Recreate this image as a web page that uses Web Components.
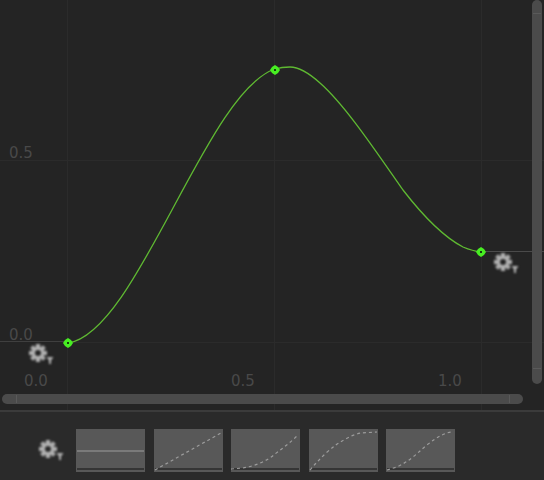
<!DOCTYPE html>
<html>
<head>
<meta charset="utf-8">
<title>Curve editor</title>
<style>
  html, body { margin: 0; background: #2a2a2a; }
</style>
</head>
<body>
<curve-editor>
  <curve-plot slot="plot"></curve-plot>
  <preset-bar slot="presets">
    <curve-thumb d="M1 22 L68 22"></curve-thumb>
    <curve-thumb d="M1 41 L67 4" dashed></curve-thumb>
    <curve-thumb d="M0 40 L12 39 C 24 37 36 32 44 25 C 52 19 60 13 67 6" dashed></curve-thumb>
    <curve-thumb d="M1 41 C 6 35 11 30 17 24 C 24 18 29 14 35 11 C 41 7 47 5 52 4 L68 3" dashed></curve-thumb>
    <curve-thumb d="M1 41 L11 38 C 17 35 22 32 27 28 C 32 24 36 20 41 16 C 46 12 50 9 54 7 C 58 5 62 3 67 3" dashed></curve-thumb>
  </preset-bar>
</curve-editor>

<script>
class GearMenu extends HTMLElement {
  constructor() {
    super();
    this.attachShadow({ mode: 'open' });
    // 8 tooth gear, built once
    let teeth = '';
    for (let i = 0; i < 8; i++) {
      teeth += `<rect x="6.9" y="0" width="4.2" height="4" transform="rotate(${i * 45} 9 9)"/>`;
    }
    this.shadowRoot.innerHTML = `
      <style>
        :host { display: block; width: 25px; height: 21px; }
        svg { display: block; overflow: visible; filter: blur(.8px); }
      </style>
      <svg width="25" height="21" viewBox="0 0 25 21">
        <g fill="#b0b0b0">
          ${teeth}
          <path fill-rule="evenodd" d="M9 2.5a6.5 6.5 0 1 0 0 13a6.5 6.5 0 1 0 0-13zM9 6a3 3 0 1 1 0 6a3 3 0 1 1 0-6z"/>
        </g>
        <path d="M17.5 13h7l-2.5 3.5v3.5h-2v-3.5z" fill="#b0b0b0"/>
      </svg>
    `;
  }
}

class CurvePlot extends HTMLElement {
  constructor() {
    super();
    this.attachShadow({ mode: 'open' });
    const key = (x, y) => `
      <g transform="translate(${x} ${y})">
        <path d="M0 -5 L3 -3 L5 0 L3 3 L0 5 L-3 3 L-5 0 L-3 -3z" fill="#47ee22"/>
        <rect x="-1" y="-1" width="2" height="2" fill="#163d10"/>
      </g>`;
    this.shadowRoot.innerHTML = `
      <style>
        :host { display: block; position: relative; height: 410px; background: #242424; overflow: hidden; }
        svg { position: absolute; left: 0; top: 0; }
        .label { position: absolute; font: 15px "DejaVu Sans", sans-serif; color: #494949; line-height: 18px; }
        gear-menu { position: absolute; }
        .thumb { position: absolute; background: #4b4b4b; }
        .v { left: 532px; top: 0; width: 10px; height: 384px; border-radius: 5px; }
        .h { left: 2px; top: 394px; width: 521px; height: 10px; border-radius: 5px; }
        .tick { position: absolute; background: #5a5a5a; }
      </style>
      <svg width="544" height="410" viewBox="0 0 544 410">
        <g stroke="#2b2b2b" stroke-width="1" shape-rendering="crispEdges">
          <path d="M67.5 0V410M274.5 0V410M481.5 0V410"/>
          <path d="M0 160.5H544M68 342.5H544"/>
        </g>
        <path d="M0 341.5H68" stroke="#3f3f3f" shape-rendering="crispEdges"/>
        <path d="M481 251.5H544" stroke="#4a4a4a" shape-rendering="crispEdges"/>
        <path d="M68 343 C 137 333 206 92 275 69
                 C 280 67.5 285 67 290 67 C 300 67 310 74 320 83
                 C 345 105 375 150 403 190 C 420 212 440 235 463 247
                 C 470 250 476 251.5 481 252" fill="none" stroke="#5fb932" stroke-width="1.3"/>
        ${key(68, 343)}${key(275, 70)}${key(481, 252)}
      </svg>
      <span class="label" style="left:9px;top:144px">0.5</span>
      <span class="label" style="left:9px;top:326px">0.0</span>
      <span class="label" style="left:24px;top:372px">0.0</span>
      <span class="label" style="left:231px;top:372px">0.5</span>
      <span class="label" style="left:438px;top:372px">1.0</span>
      <gear-menu style="left:29px;top:344px"></gear-menu>
      <gear-menu style="left:494px;top:253px"></gear-menu>
      <div class="thumb v"></div>
      <div class="thumb h"></div>
      <div class="tick" style="left:16px;top:395px;width:1px;height:8px"></div>
      <div class="tick" style="left:509px;top:395px;width:1px;height:8px"></div>
      <div class="tick" style="left:533px;top:368px;width:8px;height:1px"></div>
      <div class="tick" style="left:533px;top:13px;width:8px;height:1px"></div>
    `;
  }
}

class CurveThumb extends HTMLElement {
  constructor() {
    super();
    this.attachShadow({ mode: 'open' });
    const dash = this.hasAttribute('dashed') ? 'stroke-dasharray="3 3"' : '';
    this.shadowRoot.innerHTML = `
      <style>
        :host { display: block; width: 69px; height: 43px; background: #585858; position: relative; }
        svg { display: block; filter: blur(.25px); }
      </style>
      <svg width="69" height="43" viewBox="0 0 69 43">
        <rect x="1" y="39" width="67" height="2" fill="#353535"/>
        <path d="${this.getAttribute('d')}" fill="none" stroke="#9c9c9c" stroke-width="1.2" ${dash}/>
      </svg>
    `;
  }
}

class PresetBar extends HTMLElement {
  constructor() {
    super();
    this.attachShadow({ mode: 'open' });
    this.shadowRoot.innerHTML = `
      <style>
        :host { display: flex; align-items: center; padding: 17px 0 0 39px; }
        .list { display: flex; gap: 8.5px; margin-left: 12px; }
      </style>
      <gear-menu></gear-menu>
      <div class="list"><slot></slot></div>
    `;
  }
}

class CurveEditor extends HTMLElement {
  constructor() {
    super();
    this.attachShadow({ mode: 'open' });
    this.shadowRoot.innerHTML = `
      <style>
        :host { display: block; width: 544px; height: 480px; background: #2a2a2a; overflow: hidden; }
        .sep { height: 2px; background: #3b3b3b; }
      </style>
      <slot name="plot"></slot>
      <div class="sep"></div>
      <slot name="presets"></slot>
    `;
  }
}

customElements.define('gear-menu', GearMenu);
customElements.define('curve-thumb', CurveThumb);
customElements.define('curve-plot', CurvePlot);
customElements.define('preset-bar', PresetBar);
customElements.define('curve-editor', CurveEditor);
</script>
</body>
</html>
